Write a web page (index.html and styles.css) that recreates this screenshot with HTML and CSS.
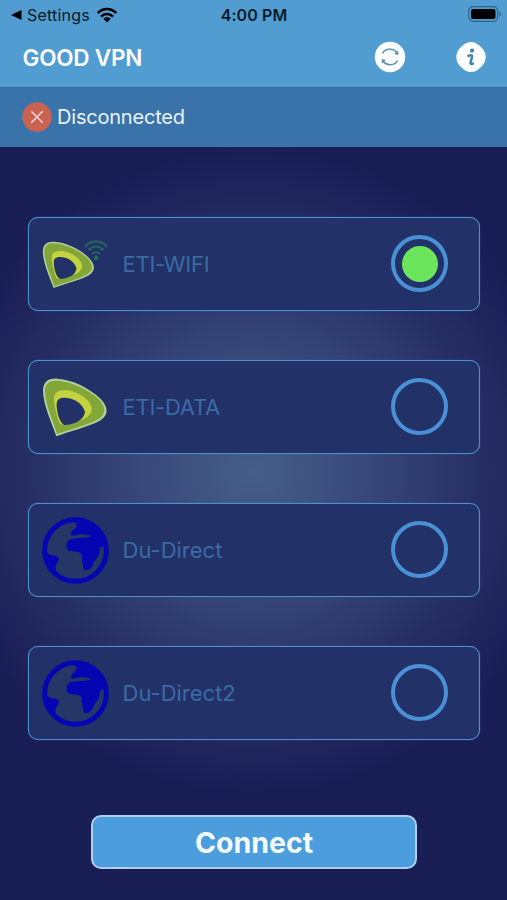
FILE: index.html
```html
<!DOCTYPE html>
<html lang="en">
<head>
  <meta charset="UTF-8" />
  <meta name="viewport" content="width=device-width, initial-scale=1" />
  <title>GOOD VPN</title>
  <link rel="stylesheet" href="styles.css">
</head>
<body>

  <!-- shared shapes -->
  <svg class="defs" width="0" height="0" aria-hidden="true">
    <symbol id="wifi" viewBox="0 0 22 16">
      <path d="M1.8 6C7 .7 15 .7 20.2 6M5 9.6c3.500-3.400 8.500-3.400 12 0" fill="none" stroke="currentColor" stroke-width="2.600" />
      <path d="M7.300 11.700c2-2 5.400-2 7.400 0L11 15.500z" fill="currentColor" />
    </symbol>
    <symbol id="drop" viewBox="66 80 198 180">
      <path d="M69 120C70 94 86 83 112 85C160 88 210 115 240 144C267 171 266 194 240 211C205 230 150 242 109 258C96 220 69 165 69 120Z" fill="#b4cd98" />
      <path d="M75 121C76 98 90 90 112 91C158 94 207 120 236 147C259 173 258 190 236 206C203 225 150 237 111 251C102 215 75 165 75 121Z" fill="#82a638" />
      <path d="M102 145C102 122 122 117 150 121C180 127 210 149 215 170C219 192 199 206 178 210L140 224L121 222C112 205 102 170 102 145Z" fill="#c3d23e" />
      <path d="M110 161C110 142 130 139 153 145C176 151 192 170 195 185C192 207 169 221 138 224C121 226 110 188 110 161Z" fill="#223168" />
    </symbol>
    <symbol id="globe" viewBox="5 5 200 200">
      <circle cx="105" cy="105" r="92" fill="#263667" stroke="#0506b2" stroke-width="15" />
      <path d="M98 16L106 24C111 32 107 38 99 43C89 51 89 60 99 61C118 54 138 55 152 62C143 68 125 67 112 68C100 71 88 68 83 77C76 85 76 98 84 105C94 111 110 106 119 112C128 119 121 130 126 142C128 153 127 163 136 163C148 163 157 153 159 143C163 133 173 125 176 115C178 106 177 100 182 94L197 90C191 46 150 10 98 16Z" fill="#0506b2" />
      <path d="M14 103C20 113 30 121 42 120C52 121 57 128 54 137C46 146 43 157 48 168L52 181C28 164 13 135 14 103Z" fill="#0506b2" />
      <path d="M184 95C179 121 171 138 160 153" fill="none" stroke="#263667" stroke-width="4" />
    </symbol>
  </svg>

  <div class="status-bar">
    <div class="back">
      <svg width="11" height="12" viewBox="0 0 11 12"><path d="M0 6L10.500 1v10z" /></svg>
      <span class="back-label">Settings</span>
      <svg class="wifi" width="22" height="16"><use href="#wifi" /></svg>
    </div>
    <span class="clock">4:00 PM</span>
    <div class="battery">
      <svg width="34" height="16" viewBox="0 0 34 16">
        <rect x=".7" y=".7" width="29" height="14.600" rx="4.500" fill="none" stroke="#2f6389" stroke-width="1.200" />
        <rect x="3" y="3" width="24.500" height="10" rx="2" />
        <path d="M31.300 5.500c2 1 2 4 0 5z" fill="#2f6389" />
      </svg>
    </div>
  </div>

  <header class="header">
    <h1>GOOD VPN</h1>
    <div class="actions">
      <svg width="32" height="32" viewBox="0 0 32 32">
        <circle cx="16" cy="16" r="15.200" fill="#fff" />
        <path d="M8.500 12.500C11 7 20 7 23 12M23.500 19.500C21 25 12 25 9 20" fill="none" stroke="#5691b7" stroke-width="1.500" />
        <path d="M24.300 9.500v4.500l-4.300-1zM7.700 22.500v-4.500l4.300 1z" fill="#5691b7" />
      </svg>
      <svg width="32" height="32" viewBox="0 0 32 32">
        <path d="M16 1C20 1 23 3 26 6C29 9 30.700 12 30.700 16S29 23 26 26C23 29 20 31 16 31S9 29 6 26C3 23 1.300 20 1.300 16S3 9 6 6C9 3 12 1 16 1Z" fill="#fff" />
        <circle cx="17" cy="9.600" r="2.100" fill="#3d83b1" />
        <path d="M12.500 15.500C14.500 13.800 17.400 13.500 17 16L15.600 21.300C15.200 23.500 16.700 23.500 18.700 21.900" fill="none" stroke="#3d83b1" stroke-width="2.500" />
      </svg>
    </div>
  </header>

  <div class="connection">
    <svg width="30" height="30" viewBox="0 0 30 30">
      <circle cx="15" cy="15" r="14.700" fill="#ca6251" />
      <path d="M9.300 9.300l11.400 11.400M20.700 9.300L9.300 20.700" stroke="#f0d6d8" stroke-width="1.600" />
    </svg>
    <span>Disconnected</span>
  </div>

  <main>
    <div class="server selected">
      <div class="logo logo-wifi">
        <svg class="drop-small" width="53" height="49"><use href="#drop" /></svg>
        <svg class="signal" width="24" height="21" viewBox="0 0 24 21">
          <path d="M1 6.500C7-.3 17-.3 23 6.500M4.500 10C9 5.300 15 5.300 19.500 10M8 14C10.500 11.500 13.500 11.500 16 14" fill="none" stroke="#2a665c" stroke-width="2" />
          <circle cx="12" cy="18" r="2.400" fill="#2a6b56" />
        </svg>
      </div>
      <span class="name">ETI-WIFI</span>
      <span class="radio"></span>
    </div>

    <div class="server">
      <div class="logo"><svg width="66" height="60"><use href="#drop" /></svg></div>
      <span class="name">ETI-DATA</span>
      <span class="radio"></span>
    </div>

    <div class="server">
      <div class="logo"><svg width="67" height="67"><use href="#globe" /></svg></div>
      <span class="name name-du">Du-Direct</span>
      <span class="radio"></span>
    </div>

    <div class="server">
      <div class="logo"><svg width="67" height="67"><use href="#globe" /></svg></div>
      <span class="name name-du">Du-Direct2</span>
      <span class="radio"></span>
    </div>

    <button class="connect" type="button">Connect</button>
  </main>

</body>
</html>
```
FILE: styles.css
```css
* {
  box-sizing: border-box;
}
body {
  margin: 0;
  height: 900px;
  overflow: hidden;
  display: flex;
  flex-direction: column;
  background: #191e55;
  color: white;
  font-family: Inter, "Liberation Sans", sans-serif;
}
svg {
  display: block;
  flex: none;
}
.defs {
  position: absolute;
}
.status-bar {
  display: grid;
  grid-template-columns: 1fr auto 1fr;
  align-items: center;
  height: 30px;
  padding: 0 5px 0 11px;
  background: #519cd1;
  color: #0b1a29;
}
.back {
  display: flex;
  align-items: center;
}
.back-label {
  margin-left: 5px;
  width: 62px;
  font-size: 16px;
  letter-spacing: 0.2px;
  white-space: nowrap;
}
.wifi {
  margin-left: 7px;
  color: #000;
}
.clock {
  margin-right: 5px;
  font-size: 16px;
  font-weight: 600;
  letter-spacing: 0.1px;
}
.battery {
  justify-self: end;
  padding-bottom: 2px;
}
.header {
  display: flex;
  align-items: center;
  justify-content: space-between;
  height: 57px;
  padding: 0 20px 3px 22.500px;
  background: #519cd1;
}
h1 {
  margin: 0;
  font-size: 22.500px;
  font-weight: 600;
  letter-spacing: -0.2px;
}
.actions {
  display: flex;
  gap: 49px;
}
.connection {
  display: flex;
  align-items: center;
  gap: 5px;
  height: 60px;
  padding: 0 0 1px 22px;
  border-top: 1px solid #326c9e;
  background: #3973a9;
  color: #e9f4fc;
  font-size: 20px;
  letter-spacing: -0.2px;
}
main {
  flex: 1;
  display: flex;
  flex-direction: column;
  gap: 49px;
  padding: 70px 27px 0 28px;
  background: radial-gradient(ellipse 320px 325px at 50% 325px, #465e89 0%, #3c4f7e 25%, #323f72 48%, #242c61 75%, #191e55 100%);
}
.server {
  display: flex;
  align-items: center;
  height: 94px;
  padding: 0 31px 0 13px;
  border: 1px solid #4e8fce;
  border-radius: 10px;
  background: #223168;
  box-shadow: 0 0 1px #4886c4;
}
.logo {
  width: 67px;
  margin-right: 13.500px;
}
.logo-wifi {
  display: flex;
  align-items: flex-start;
}
.signal {
  margin-left: -11px;
}
.name {
  flex: 1;
  font-size: 22px;
  letter-spacing: -0.25px;
  color: #3a6ba3;
}
.name-du {
  letter-spacing: 0;
}
.radio {
  display: flex;
  align-items: center;
  justify-content: center;
  width: 57px;
  height: 57px;
  margin-bottom: 1px;
  border: 4px solid #4990d5;
  border-radius: 50%;
}
.selected .radio::after {
  content: "";
  width: 36px;
  height: 36px;
  flex: none;
  border-radius: 50%;
  background: #6be65c;
}
.connect {
  align-self: center;
  width: 326px;
  height: 54px;
  margin-top: 26px;
  padding: 1px 0 0;
  border: 2px solid #b1cdef;
  border-radius: 10px;
  background: #4b9ddd;
  color: #f4fcff;
  font-family: inherit;
  font-size: 28.500px;
  font-weight: 700;
}
```
